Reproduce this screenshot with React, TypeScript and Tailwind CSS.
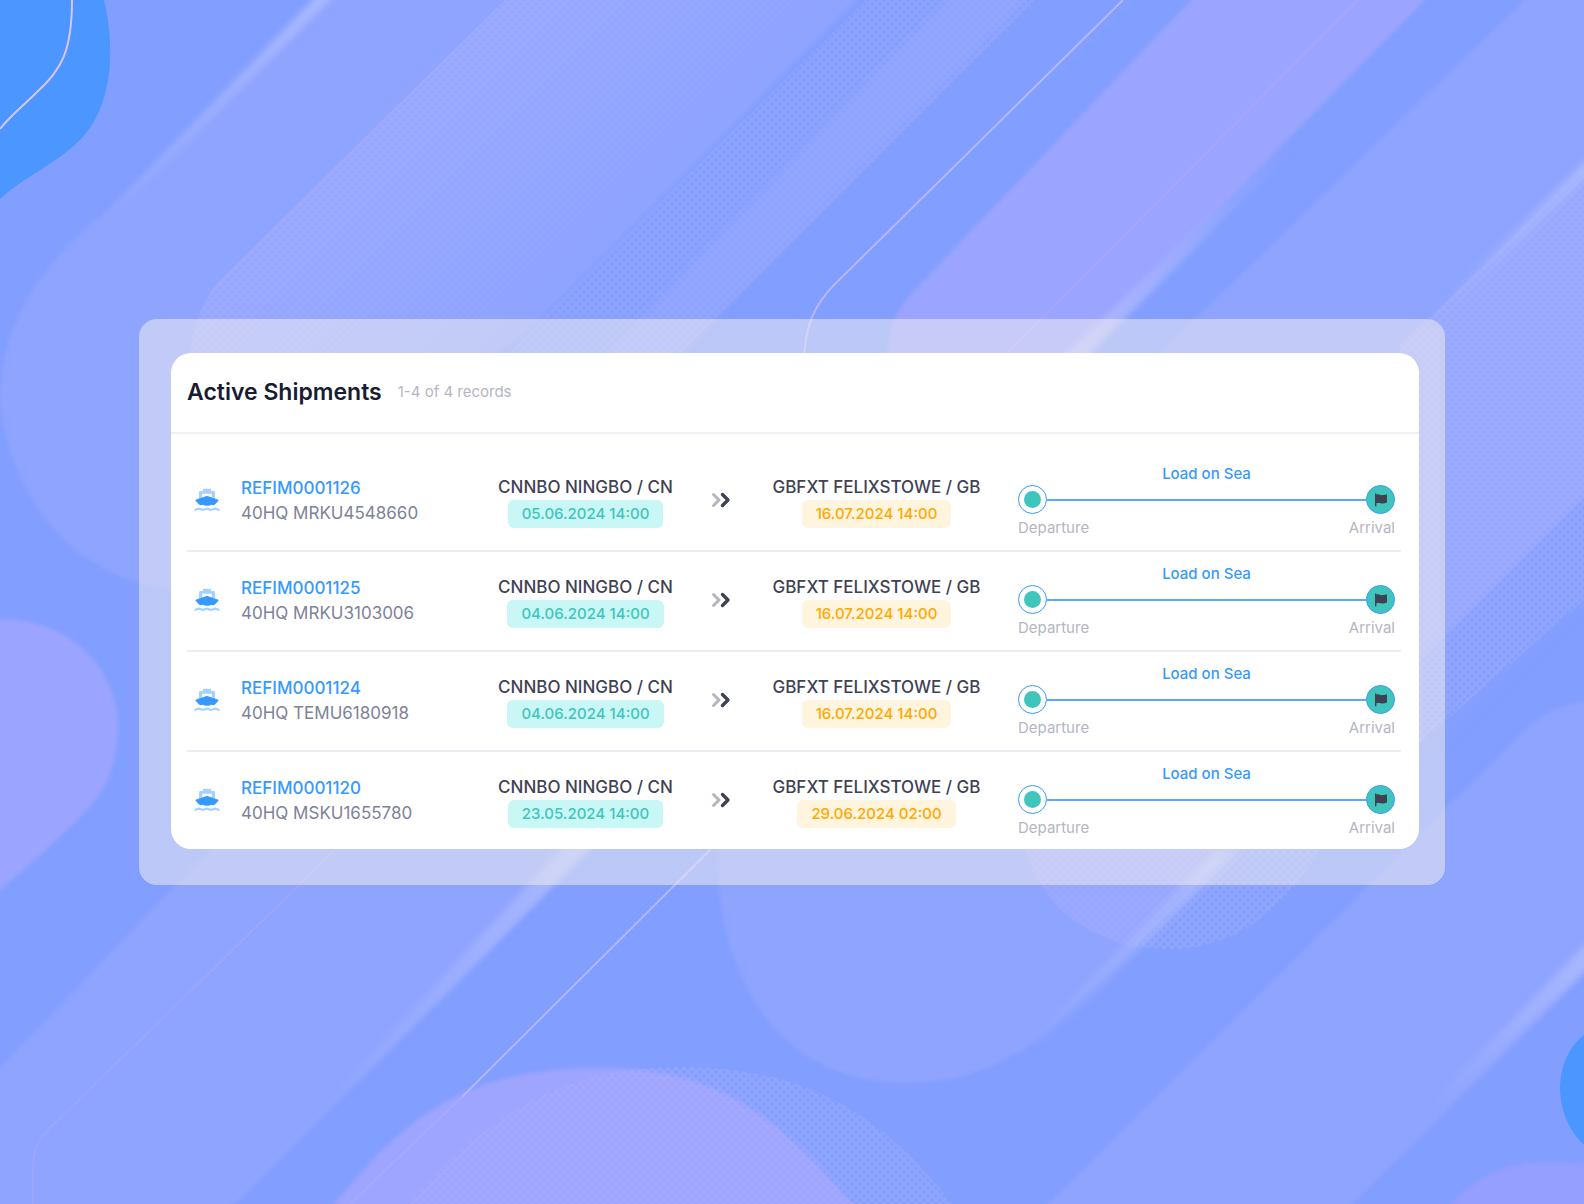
type Shipment = {
  ref: string;
  container: string;
  origin: string;
  departure: string;
  destination: string;
  arrival: string;
  stage: string;
};

const shipments: Shipment[] = [
  {
    ref: 'REFIM0001126',
    container: '40HQ MRKU4548660',
    origin: 'CNNBO NINGBO / CN',
    departure: '05.06.2024 14:00',
    destination: 'GBFXT FELIXSTOWE / GB',
    arrival: '16.07.2024 14:00',
    stage: 'Load on Sea',
  },
  {
    ref: 'REFIM0001125',
    container: '40HQ MRKU3103006',
    origin: 'CNNBO NINGBO / CN',
    departure: '04.06.2024 14:00',
    destination: 'GBFXT FELIXSTOWE / GB',
    arrival: '16.07.2024 14:00',
    stage: 'Load on Sea',
  },
  {
    ref: 'REFIM0001124',
    container: '40HQ TEMU6180918',
    origin: 'CNNBO NINGBO / CN',
    departure: '04.06.2024 14:00',
    destination: 'GBFXT FELIXSTOWE / GB',
    arrival: '16.07.2024 14:00',
    stage: 'Load on Sea',
  },
  {
    ref: 'REFIM0001120',
    container: '40HQ MSKU1655780',
    origin: 'CNNBO NINGBO / CN',
    departure: '23.05.2024 14:00',
    destination: 'GBFXT FELIXSTOWE / GB',
    arrival: '29.06.2024 02:00',
    stage: 'Load on Sea',
  },
];

function Backdrop() {
  return (
    <svg
      className="absolute inset-0 w-full h-full"
      viewBox="0 0 1584 1204"
      preserveAspectRatio="xMidYMid slice"
      aria-hidden="true"
    >
      <defs>
        <pattern id="mesh" width="8" height="8" patternUnits="userSpaceOnUse">
          <path d="M0 0L8 8M8 0L0 8" stroke="#afb2ff" strokeWidth="1.8" opacity="0.4" />
        </pattern>
        <linearGradient id="meshFade" gradientUnits="userSpaceOnUse" x1="350" y1="150" x2="530" y2="330">
          <stop offset="0" stopColor="#fff" />
          <stop offset="1" stopColor="#fff" stopOpacity="0" />
        </linearGradient>
        <mask id="fadeMask">
          <rect width="1584" height="1204" fill="url(#meshFade)" />
        </mask>
        <linearGradient id="streakDown" x1="1" y1="0" x2="0" y2="1">
          <stop offset="0" stopColor="#a9b8ff" />
          <stop offset="1" stopColor="#a9b8ff" stopOpacity="0" />
        </linearGradient>
        <linearGradient id="streakUp" x1="0" y1="1" x2="1" y2="0">
          <stop offset="0" stopColor="#b3b9ff" />
          <stop offset="1" stopColor="#b3b9ff" stopOpacity="0" />
        </linearGradient>
        <filter id="soft">
          <feGaussianBlur stdDeviation="2" />
        </filter>
        <filter id="softer" x="-10%" y="-10%" width="120%" height="120%">
          <feGaussianBlur stdDeviation="3" />
        </filter>
      </defs>

      <rect width="1584" height="1204" fill="#829eff" />

      {/* top left band */}
      <path
        d="M330 -10L105 212C35 268 0 330 0 400C8 490 70 590 200 592L540 320L866 -10Z"
        fill="#8fa4ff"
        filter="url(#soft)"
      />
      <path d="M318 -6H336L118 212L98 220Z" fill="url(#streakDown)" filter="url(#softer)" />
      <g mask="url(#fadeMask)">
        <path d="M505 0L225 275C205 295 193 320 190 360H500L866 0Z" fill="#95a7ff" />
        <path d="M505 0L225 275C205 295 193 320 190 360H500L866 0Z" fill="url(#mesh)" />
      </g>
      <path d="M866 0H1037L675 360H500Z" fill="url(#mesh)" opacity="0.8" />
      <path d="M955 -10H1037L675 360H600Z" fill="#98a8ff" opacity="0.5" filter="url(#softer)" />

      {/* middle band */}
      <path d="M1201 -10H1435L1070 360H887C888 330 895 310 915 290Z" fill="#9ba5ff" filter="url(#soft)" />
      <path d="M1292 140L1060 360H1084L1292 150Z" fill="url(#streakUp)" filter="url(#softer)" />
      <path d="M1358 0L1005 355" stroke="#ada5ff" strokeWidth="2" opacity="0.7" />
      <path
        d="M1123 0L835 284C815 304 805 325 804 360"
        fill="none"
        stroke="#b4b6ff"
        strokeWidth="2"
      />

      {/* right band */}
      <path d="M1535 -10H1600V600H1400V380H1132Z" fill="#8fa4ff" filter="url(#soft)" />
      <path d="M1584 168L1400 346V760L1584 600Z" fill="#95a7ff" />
      <path d="M1600 480L1420 660V770L1600 590Z" fill="#849fff" filter="url(#softer)" />
      <path d="M1584 168L1400 346V760L1584 600Z" fill="url(#mesh)" />
      <path d="M1590 156V174L1440 320L1426 318Z" fill="url(#streakDown)" filter="url(#softer)" />

      {/* bottom left */}
      <path
        d="M-10 620C70 614 118 670 118 727C116 790 90 808 50 846L-10 899Z"
        fill="#9ba5ff"
        filter="url(#soft)"
      />
      <path d="M220 840L-10 1078V1220H220L600 840Z" fill="#8fa4ff" filter="url(#soft)" />
      <path d="M598 840H570L325 1104L338 1104Z" fill="url(#streakDown)" filter="url(#softer)" />
      <path
        d="M340 845L48 1130C36 1142 33 1152 33 1170V1204"
        fill="none"
        stroke="#9fa6ff"
        strokeWidth="2"
        opacity="0.8"
      />

      {/* bottom circles */}
      <path
        d="M718 840C712 970 775 1083 905 1083C970 1083 1020 1058 1060 1020L1240 840Z"
        fill="#8fa4ff"
        filter="url(#soft)"
      />
      <path d="M1022 840C1040 910 1100 949 1170 949C1240 949 1295 900 1325 840Z" fill="url(#mesh)" />
      <path d="M1022 840C1040 905 1080 935 1135 947L1240 840Z" fill="#9ca8ff" opacity="0.6" />
      <path d="M1240 850H1215L1025 1048L1040 1048Z" fill="url(#streakDown)" filter="url(#softer)" />
      <path
        d="M325 1216C400 1120 460 1068 600 1068C730 1068 790 1130 862 1216Z"
        fill="#9ea5ff"
        filter="url(#soft)"
      />
      <path
        d="M410 1204C480 1120 560 1067 680 1067C800 1067 880 1110 952 1204Z"
        fill="url(#mesh)"
      />
      <path d="M715 845L462 1097" stroke="#b2b8ff" strokeWidth="2" />
      <path d="M462 1097L350 1204" stroke="#aeb0ff" strokeWidth="2" opacity="0.5" />

      {/* bottom right */}
      <path
        d="M1600 700C1545 702 1525 730 1500 755L1036 1216H1340L1600 960Z"
        fill="#8fa4ff"
        filter="url(#soft)"
      />
      <path d="M1590 940V966L1430 1118L1440 1094Z" fill="url(#streakDown)" filter="url(#softer)" />
      <path d="M1440 1220C1480 1160 1530 1157 1600 1166V1220Z" fill="#949fff" filter="url(#soft)" />
      <path d="M1584 1035C1552 1060 1552 1115 1584 1145Z" fill="#4b97ff" />

      {/* top left corner */}
      <path d="M0 0H104C118 60 108 112 80 140C55 165 22 178 0 199Z" fill="#4b97ff" />
      <path
        d="M72 0C72 50 62 70 36 93C22 107 10 116 0 129"
        fill="none"
        stroke="#dcc2ff"
        strokeWidth="2"
      />
    </svg>
  );
}

function ShipIcon() {
  return (
    <svg className="w-[26px] h-6" viewBox="0 0 26 24" aria-hidden="true">
      <path
        fill="#a6d2ff"
        fillRule="evenodd"
        d="M9 3V1.800C9 1.200 9.400 0.800 10 0.800H16C16.600 0.800 17 1.200 17 1.800V3H19.500C20.500 3 21 3.500 21 4.500V11H5V4.500C5 3.500 5.500 3 6.500 3ZM8.200 5.800V9.600L13 8L17.800 9.600V5.800Z"
      />
      <path
        fill="#3699ff"
        d="M12.200 8.200C12.700 8 13.300 8 13.800 8.200L23.800 11.600C24.600 11.900 24.700 12.500 24.200 13.100L21.200 16.300C20 17.500 18.500 17.300 17.300 16.800C15 18.200 11 18.200 8.700 16.800C7.500 17.300 6 17.500 4.800 16.300L1.800 13.100C1.300 12.500 1.400 11.900 2.200 11.600Z"
      />
      <path
        d="M0.500 21.800C2.500 21.800 3 20.600 4.800 20.600S7.200 21.800 9 21.800S11.300 20.600 13 20.600S15.200 21.800 17 21.800S19.500 20.600 21.200 20.600S23.500 21.800 25.500 21.800"
        fill="none"
        stroke="#a6d2ff"
        strokeWidth="2.200"
      />
    </svg>
  );
}

function ArrowsIcon() {
  return (
    <svg className="w-5 h-4" viewBox="0 0 20 16" fill="none" aria-hidden="true">
      <path
        d="M2.500 2.500L8 8L2.500 13.500"
        stroke="#b5b5c0"
        strokeWidth="3"
        strokeLinecap="round"
        strokeLinejoin="round"
      />
      <path
        d="M11.500 2.500L17 8L11.500 13.500"
        stroke="#3f4254"
        strokeWidth="3.400"
        strokeLinecap="round"
        strokeLinejoin="round"
      />
    </svg>
  );
}

function FlagIcon() {
  return (
    <svg className="w-[14px] h-[14px]" viewBox="0 0 14 14" fill="#3f4254" aria-hidden="true">
      <path d="M1 1C1 0.500 1.300 0.300 1.700 0.300S2.400 0.600 2.400 1V1.600C5 0.700 6.500 2.600 9 2.100C10.500 1.900 11.800 1.400 13 1.200V9.600C11.500 10.300 10.300 10.600 9 10.600C6.500 10.600 5 9.300 2.400 10.300V12.800C2.400 13.200 2.100 13.500 1.700 13.500S1 13.200 1 12.800Z" />
    </svg>
  );
}

function Progress({ stage }: { stage: string }) {
  return (
    <div className="text-[15px] leading-5">
      <div className="text-center font-medium text-[#3699ff]">{stage}</div>
      <div className="mt-px flex items-center">
        <span className="flex size-[29px] items-center justify-center rounded-full border border-[#3699ff] bg-white">
          <span className="size-[17px] rounded-full bg-[#40c5bd]" />
        </span>
        <span className="h-0.5 flex-1 bg-[#57aaff]" />
        <span className="flex size-[29px] items-center justify-center rounded-full border border-[#3699ff] bg-[#40c5bd]">
          <FlagIcon />
        </span>
      </div>
      <div className="mt-1 flex justify-between text-[#b5b5c3]">
        <span>Departure</span>
        <span>Arrival</span>
      </div>
    </div>
  );
}

export default function App() {
  return (
    <div className="relative flex min-h-screen items-center overflow-hidden bg-[#829eff] px-[139px] font-['Inter',sans-serif]">
      <Backdrop />

      <main className="relative w-full rounded-[18px] bg-[#f6f2ef]/50 pt-[34px] pr-[26px] pb-9 pl-8">
        <section className="overflow-hidden rounded-[20px] bg-white">
          <header className="flex h-[81px] items-center gap-4 border-b-2 border-[#f0f1f7] px-4">
            <h1 className="text-[23px] font-semibold text-[#181c32]">Active Shipments</h1>
            <span className="text-[15px] text-[#b5b5c3]">1-4 of 4 records</span>
          </header>

          <div className="pt-[18px] pr-[18px] pl-4">
            <table className="w-full table-fixed border-separate border-spacing-0">
              <colgroup>
                <col className="w-[54px]" />
                <col className="w-[244px]" />
                <col className="w-[201px]" />
                <col className="w-[69px]" />
                <col className="w-[243px]" />
                <col />
              </colgroup>
              <tbody className="[&>tr:last-child>td]:h-[97px] [&>tr:last-child>td]:border-b-0">
                {shipments.map((s) => (
                  <tr
                    key={s.ref}
                    className="align-top [&>td]:h-[100px] [&>td]:border-b-2 [&>td]:border-[#ebedf3]"
                  >
                    <td className="pt-9 pl-[7px]">
                      <ShipIcon />
                    </td>
                    <td className="pt-6 text-[17px] leading-[25px]">
                      <a href="#" className="block font-medium text-[#3699ff]">
                        {s.ref}
                      </a>
                      <div className="text-[#7e8299]">{s.container}</div>
                    </td>
                    <td className="pt-[23px] text-center">
                      <div className="text-[17px] leading-6 font-medium text-[#3f4254]">{s.origin}</div>
                      <span className="mt-px inline-flex h-7 items-center rounded-md bg-[#c9f7f5] px-[14px] text-[15px] font-medium text-[#40c5bd]">
                        {s.departure}
                      </span>
                    </td>
                    <td className="pt-10">
                      <div className="flex justify-center">
                        <ArrowsIcon />
                      </div>
                    </td>
                    <td className="pt-[23px] text-center">
                      <div className="text-[17px] leading-6 font-medium text-[#3f4254]">{s.destination}</div>
                      <span className="mt-px inline-flex h-7 items-center rounded-md bg-[#fff4de] px-[14px] text-[15px] font-medium text-[#ffa800]">
                        {s.arrival}
                      </span>
                    </td>
                    <td className="pt-3 pr-[6px] pl-5">
                      <Progress stage={s.stage} />
                    </td>
                  </tr>
                ))}
              </tbody>
            </table>
          </div>
        </section>
      </main>
    </div>
  );
}
